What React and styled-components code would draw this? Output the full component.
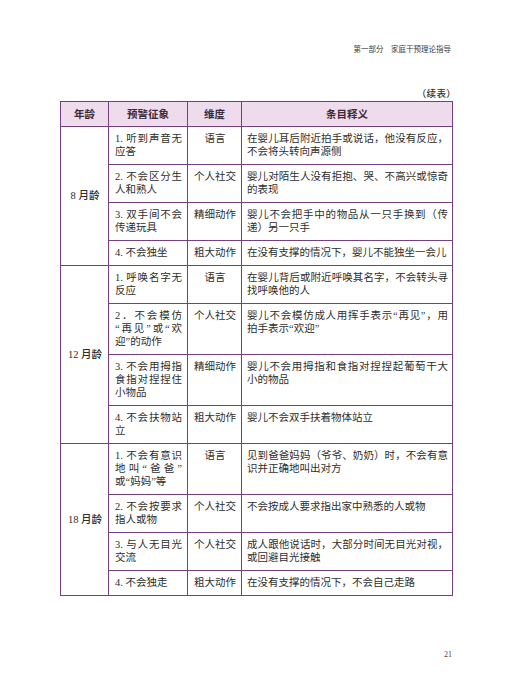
import React from 'react';
import styled, { createGlobalStyle } from 'styled-components';

const GlobalStyle = createGlobalStyle`
  html, body {
    margin: 0;
    padding: 0;
    background: #ffffff;
  }
  body {
    font-family: "Liberation Serif", "Noto Sans CJK SC", serif;
    color: #2b2b2b;
  }
`;

const Page = styled.div`
  width: 520px;
  height: 694px;
  box-sizing: border-box;
  padding: 43px 68px 0 60px;
  display: flex;
  flex-direction: column;
  background: #ffffff;
`;

const RunningHead = styled.div`
  align-self: flex-end;
  font-family: "Noto Sans CJK SC", sans-serif;
  font-size: 7.5px;
  line-height: 12px;
  color: #3a3a3a;
  margin-right: 1px;
`;

const Continued = styled.div`
  align-self: flex-end;
  margin-top: 31px;
  margin-right: -4px;
  font-family: "Noto Sans CJK SC", serif;
  font-size: 9.5px;
  font-weight: 500;
  line-height: 14px;
  color: #333;
  letter-spacing: 0.3px;
`;

const Table = styled.table`
  margin-top: 1px;
  width: 392px;
  border-collapse: collapse;
  table-layout: fixed;
  font-size: 10.5px;
  line-height: 13px;
  color: #2e2e2e;
`;

const HeadCell = styled.th`
  border: 1px solid #74407f;
  background: #eedcec;
  padding: 5px 4px 6px;
  font-family: "Noto Sans CJK SC", sans-serif;
  font-weight: 700;
  color: #3a2a3a;
  text-align: center;
`;

const Cell = styled.td`
  border: 1px solid #74407f;
  padding: 5px ${(p) => (p.$wide ? '4px' : '5px')} 6px ${(p) => (p.$wide ? '5px' : '6px')};
  vertical-align: ${(p) => (p.$middle ? 'middle' : 'top')};
  text-align: ${(p) => (p.$center ? 'center' : 'left')};
  font-weight: ${(p) => (p.$middle ? 500 : 400)};
`;

const Line = styled.span`
  display: block;
  white-space: nowrap;
  text-align: ${(p) => (p.$fill ? 'justify' : 'inherit')};
  text-align-last: ${(p) => (p.$fill ? 'justify' : 'auto')};
`;

const PageNumber = styled.div`
  align-self: flex-end;
  margin-top: 53px;
  font-size: 8px;
  line-height: 12px;
  color: #444;
`;

const groups = [
  {
    age: '8 月龄',
    rows: [
      { sign: ['1. 听到声音无', '应答'], dim: '语言', desc: ['在婴儿耳后附近拍手或说话，他没有反应，', '不会将头转向声源侧'] },
      { sign: ['2. 不会区分生', '人和熟人'], dim: '个人社交', desc: ['婴儿对陌生人没有拒抱、哭、不高兴或惊奇', '的表现'] },
      { sign: ['3. 双手间不会', '传递玩具'], dim: '精细动作', desc: ['婴儿不会把手中的物品从一只手换到（传', '递）另一只手'] },
      { sign: ['4. 不会独坐'], dim: '粗大动作', desc: ['在没有支撑的情况下，婴儿不能独坐一会儿'] },
    ],
  },
  {
    age: '12 月龄',
    rows: [
      { sign: ['1. 呼唤名字无', '反应'], dim: '语言', desc: ['在婴儿背后或附近呼唤其名字，不会转头寻', '找呼唤他的人'] },
      { sign: ['2．不会模仿', '“再见”或“欢', '迎”的动作'], dim: '个人社交', desc: ['婴儿不会模仿成人用挥手表示“再见”，用', '拍手表示“欢迎”'] },
      { sign: ['3. 不会用拇指', '食指对捏捏住', '小物品'], dim: '精细动作', desc: ['婴儿不会用拇指和食指对捏捏起葡萄干大', '小的物品'] },
      { sign: ['4. 不会扶物站', '立'], dim: '粗大动作', desc: ['婴儿不会双手扶着物体站立'] },
    ],
  },
  {
    age: '18 月龄',
    rows: [
      { sign: ['1. 不会有意识', '地叫“爸爸”', '或“妈妈”等'], dim: '语言', desc: ['见到爸爸妈妈（爷爷、奶奶）时，不会有意', '识并正确地叫出对方'] },
      { sign: ['2. 不会按要求', '指人或物'], dim: '个人社交', desc: ['不会按成人要求指出家中熟悉的人或物'] },
      { sign: ['3. 与人无目光', '交流'], dim: '个人社交', desc: ['成人跟他说话时，大部分时间无目光对视，', '或回避目光接触'] },
      { sign: ['4. 不会独走'], dim: '粗大动作', desc: ['在没有支撑的情况下，不会自己走路'] },
    ],
  },
];

// every line but the last one runs to the full width of its cell
function Lines({ items }) {
  return items.map((text, i) => (
    <Line key={i} $fill={i < items.length - 1}>
      {text}
    </Line>
  ));
}

export default function App() {
  return (
    <>
      <GlobalStyle />
      <Page>
        <RunningHead>第一部分　家庭干预理论指导</RunningHead>
        <Continued>（续表）</Continued>
        <Table>
          <colgroup>
            <col style={{ width: 48 }} />
            <col style={{ width: 79 }} />
            <col style={{ width: 54 }} />
            <col style={{ width: 211 }} />
          </colgroup>
          <thead>
            <tr>
              <HeadCell>年龄</HeadCell>
              <HeadCell>预警征象</HeadCell>
              <HeadCell>维度</HeadCell>
              <HeadCell>条目释义</HeadCell>
            </tr>
          </thead>
          <tbody>
            {groups.map((group) =>
              group.rows.map((row, i) => (
                <tr key={group.age + i}>
                  {i === 0 && (
                    <Cell rowSpan={group.rows.length} $center $middle>
                      {group.age}
                    </Cell>
                  )}
                  <Cell>
                    <Lines items={row.sign} />
                  </Cell>
                  <Cell $center>{row.dim}</Cell>
                  <Cell $wide>
                    <Lines items={row.desc} />
                  </Cell>
                </tr>
              ))
            )}
          </tbody>
        </Table>
        <PageNumber>21</PageNumber>
      </Page>
    </>
  );
}
